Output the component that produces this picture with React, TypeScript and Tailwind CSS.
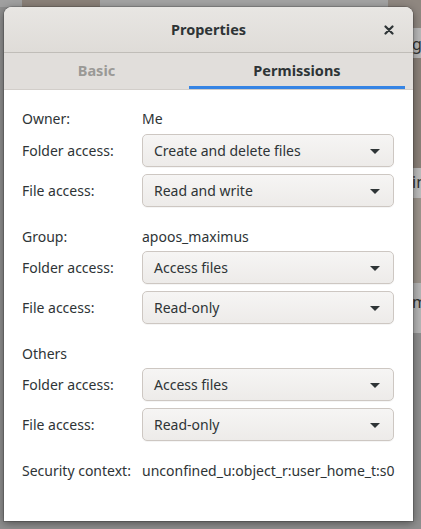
import React from "react";

function Combo({ value, mt }: { value: string; mt: string }) {
  return (
    <div className={`flex ${mt} items-center`}>
      <div className="w-[120px] shrink-0" />
      <div className="flex h-[33px] w-[252px] items-center justify-between rounded-[5px] border border-[#cdc7c2] bg-gradient-to-b from-[#f6f5f4] to-[#edebe9] pl-[11px] pr-[11px] text-[#2e3436] shadow-[0_1px_0_rgba(0,0,0,0.04)]">
        <span>{value}</span>
        <svg width="12" height="8" viewBox="0 0 12 8" className="mr-[1px]">
          <polygon points="1,2 11,2 6,7" fill="#2e3436" />
        </svg>
      </div>
    </div>
  );
}

function ComboRow({ label, value, mt }: { label: string; value: string; mt: string }) {
  return (
    <div className={`flex ${mt} items-center`}>
      <div className="w-[120px] shrink-0">{label}</div>
      <div className="flex h-[33px] w-[252px] items-center justify-between rounded-[5px] border border-[#cdc7c2] bg-gradient-to-b from-[#f6f5f4] to-[#edebe9] pl-[11px] pr-[11px] text-[#2e3436] shadow-[0_1px_0_rgba(0,0,0,0.04)]">
        <span>{value}</span>
        <svg width="12" height="8" viewBox="0 0 12 8" className="mr-[1px]">
          <polygon points="1,2 11,2 6,7" fill="#2e3436" />
        </svg>
      </div>
    </div>
  );
}

function TextRow({ label, value, mt }: { label: string; value?: string; mt: string }) {
  return (
    <div className={`flex h-[28px] ${mt} items-center`}>
      <div className="w-[120px] shrink-0">{label}</div>
      {value ? <span>{value}</span> : null}
    </div>
  );
}

export default function App() {
  void Combo;
  return (
    <div
      className="relative h-[529px] w-[421px] overflow-hidden bg-[#8e8e8e] text-[14px] text-[#2e3436]"
      style={{ fontFamily: '"Noto Sans", "Open Sans", sans-serif' }}
    >
      {/* desktop background bits */}
      <div className="absolute left-0 top-0 h-[7px] w-[22px] bg-[#a0a0a0]" />
      <div className="absolute left-[22px] top-0 h-[7px] w-[78px] bg-[#8a8078]" />
      <div className="absolute left-[100px] top-0 h-[7px] w-[288px] bg-[#a3a3a3]" />
      <div className="absolute left-[388px] top-0 h-[30px] w-[33px] bg-[#8f8780]" />
      <div className="absolute left-[413px] top-[28px] h-[30px] w-[8px] bg-[#b8b8b8]" />
      <div className="absolute left-[412px] top-[32px] text-[16px] text-[#333]">ge</div>
      <div className="absolute left-[413px] top-[58px] h-[110px] w-[8px] bg-[#8a8078]" />
      <div className="absolute left-[413px] top-[168px] h-[30px] w-[8px] bg-[#bdbdbd]" />
      <div className="absolute left-[412px] top-[170px] text-[16px] text-[#333]">in</div>
      <div className="absolute left-[413px] top-[198px] h-[85px] w-[8px] bg-[#9c948c]" />
      <div className="absolute left-[413px] top-[283px] h-[50px] w-[8px] bg-[#b5b5b5]" />
      <div className="absolute left-[412px] top-[290px] text-[16px] text-[#333]">m</div>

      {/* dialog window */}
      <div className="absolute left-[4px] top-[7px] flex h-[514px] w-[409px] flex-col overflow-hidden rounded-t-[8px] bg-white shadow-[0_2px_8px_rgba(0,0,0,0.45),0_0_0_1px_rgba(0,0,0,0.15)]">
        <div className="relative flex h-[46px] shrink-0 items-center justify-center border-b border-[#c0bdb8] bg-gradient-to-b from-[#e8e6e3] to-[#dfdcd8]">
          <span className="text-[14.5px] font-bold text-[#2e3436]">Properties</span>
          <svg className="absolute right-[19px] top-[18px]" width="10" height="10" viewBox="0 0 10 10">
            <path d="M1.5 1.5 L8.5 8.5 M8.5 1.5 L1.5 8.5" stroke="#2e3436" strokeWidth="2.2" strokeLinecap="round" />
          </svg>
        </div>
        <div className="flex h-[37px] shrink-0 border-b border-[#d2ceca] bg-[#e1dedb] text-[14.5px]">
          <div className="flex w-[185px] items-center justify-center font-bold text-[#9a9996]">Basic</div>
          <div className="flex w-[216px] items-center justify-center border-b-[3px] border-[#3584e4] pt-[3px] font-bold text-[#2e3436]">
            Permissions
          </div>
        </div>
        <div className="flex flex-col pl-[18px] pt-[14px]">
          <TextRow label="Owner:" value="Me" mt="mt-0" />
          <ComboRow label="Folder access:" value="Create and delete files" mt="mt-[2px]" />
          <ComboRow label="File access:" value="Read and write" mt="mt-[7px]" />
          <TextRow label="Group:" value="apoos_maximus" mt="mt-[15px]" />
          <ComboRow label="Folder access:" value="Access files" mt="mt-[1px]" />
          <ComboRow label="File access:" value="Read-only" mt="mt-[7px]" />
          <TextRow label="Others" mt="mt-[15px]" />
          <ComboRow label="Folder access:" value="Access files" mt="mt-[1px]" />
          <ComboRow label="File access:" value="Read-only" mt="mt-[7px]" />
          <TextRow label="Security context:" value="unconfined_u:object_r:user_home_t:s0" mt="mt-[15px]" />
        </div>
      </div>
    </div>
  );
}
